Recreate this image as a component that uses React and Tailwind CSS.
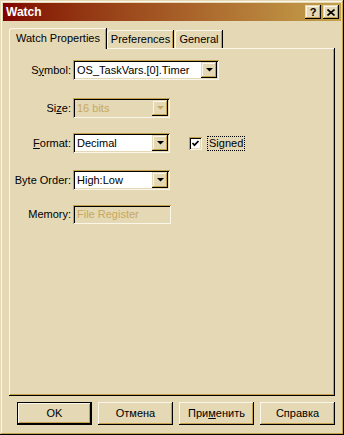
import React from 'react';

const raised = 'shadow-[inset_-1px_-1px_0_#000,inset_1px_1px_0_#E4D8B5,inset_-2px_-2px_0_#C4A24C,inset_2px_2px_0_#FAF6EA]';
const pushRaised = 'shadow-[inset_-1px_-1px_0_#000,inset_1px_1px_0_#FAF6EA,inset_-2px_-2px_0_#C4A24C,inset_2px_2px_0_#E4D8B5]';
const sunken = 'shadow-[inset_1px_1px_0_#C4A24C,inset_-1px_-1px_0_#FAF6EA,inset_2px_2px_0_#000,inset_-2px_-2px_0_#E4D8B5]';

const Arrow = ({ disabled }) => (
  <svg width="7" height="4" viewBox="0 0 7 4">
    <polygon points="0,0 7,0 3.5,3.6" fill={disabled ? '#C8A860' : '#000'} />
  </svg>
);

const Combo = ({ width, text, disabled }) => (
  <div className={`${width} h-[20px] flex p-[2px] ${sunken} ${disabled ? 'bg-[#E4D8B5]' : 'bg-white'}`}>
    <span className={`flex-1 pl-[2px] flex items-center ${disabled ? 'text-[#C8A860]' : 'text-black'}`}>{text}</span>
    <div className={`w-[16px] h-full flex items-center justify-center bg-[#E4D8B5] ${raised}`}>
      <Arrow disabled={disabled} />
    </div>
  </div>
);

const Label = ({ children }) => <div className="w-[62px] text-right whitespace-nowrap">{children}</div>;

const Btn = ({ children, primary }) =>
  primary ? (
    <div className="w-[75px] h-[23px] border border-black">
      <div className={`w-full h-full flex items-center justify-center ${pushRaised}`}>{children}</div>
    </div>
  ) : (
    <div className={`w-[75px] h-[23px] flex items-center justify-center ${pushRaised}`}>{children}</div>
  );

export default function App() {
  return (
    <div className={`w-[344px] h-[435px] bg-[#E4D8B5] p-[3px] text-[11px] leading-none text-black font-['Liberation_Sans',Arial,sans-serif] ${raised}`}>
      {/* title bar */}
      <div className="h-[18px] flex items-center bg-linear-to-r from-[#800000] to-[#C4A24C] pl-[3px] pr-[2px]">
        <span className="flex-1 text-white font-bold text-[12px]">Watch</span>
        <div className="flex gap-[2px]">
          <div className={`w-[16px] h-[14px] bg-[#E4D8B5] flex items-center justify-center font-bold text-[11px] ${raised}`}>?</div>
          <div className={`w-[16px] h-[14px] bg-[#E4D8B5] flex items-center justify-center ${raised}`}>
            <svg width="8" height="7" viewBox="0 0 8 7">
              <path d="M0.5 0.5 L7.5 6.5 M7.5 0.5 L0.5 6.5" stroke="#000" strokeWidth="1.6" />
            </svg>
          </div>
        </div>
      </div>

      <div className="px-[6px] pt-[7px]">
        {/* tabs */}
        <div className="h-[20px] flex items-start">
          <div className={`relative z-10 w-[98px] h-[21px] bg-[#E4D8B5] flex items-center justify-center rounded-tl-[2px] ${'shadow-[inset_-1px_0_0_#000,inset_1px_1px_0_#FAF6EA,inset_-2px_0_0_#C4A24C]'}`}>
            Watch Properties
          </div>
          <div className="mt-[2px] w-[67px] h-[18px] flex items-center justify-center pt-[1px] rounded-tl-[2px] shadow-[inset_-1px_0_0_#000,inset_1px_1px_0_#FAF6EA,inset_-2px_0_0_#C4A24C]">
            Preferences
          </div>
          <div className="mt-[2px] ml-[1px] w-[48px] h-[18px] flex items-center justify-center pt-[1px] rounded-tl-[2px] shadow-[inset_-1px_0_0_#000,inset_1px_1px_0_#FAF6EA,inset_-2px_0_0_#C4A24C]">
            General
          </div>
        </div>

        {/* panel */}
        <div className="h-[348px] flex flex-col pt-[12px] shadow-[inset_-1px_-1px_0_#000,inset_1px_1px_0_#FAF6EA,inset_-2px_-2px_0_#C4A24C]">
          <div className="flex items-center gap-[2px]">
            <Label>S<span className="underline underline-offset-[1px]">y</span>mbol:</Label>
            <Combo width="w-[146px]" text="OS_TaskVars.[0].Timer" />
          </div>
          <div className="flex items-center gap-[2px] mt-[18px]">
            <Label>Si<span className="underline underline-offset-[1px]">z</span>e:</Label>
            <Combo width="w-[97px]" text="16 bits" disabled />
          </div>
          <div className="flex items-center gap-[2px] mt-[15px]">
            <Label><span className="underline underline-offset-[1px]">F</span>ormat:</Label>
            <Combo width="w-[97px]" text="Decimal" />
            <div className={`ml-[17px] w-[13px] h-[13px] bg-white flex items-center justify-center ${sunken}`}>
              <svg width="9" height="9" viewBox="0 0 9 9">
                <polyline points="1.5,4 3.5,6.2 7.5,2" fill="none" stroke="#000" strokeWidth="1.7" />
              </svg>
            </div>
            <div className="ml-[3px] border border-dotted border-black px-[1px] h-[15px] flex items-center">Signed</div>
          </div>
          <div className="flex items-center gap-[2px] mt-[17px]">
            <Label>Byte Order:</Label>
            <Combo width="w-[97px]" text="High:Low" />
          </div>
          <div className="flex items-center gap-[2px] mt-[15px]">
            <Label>Memory:</Label>
            <div className={`w-[98px] h-[19px] flex items-center pl-[4px] text-[#C8A860] ${sunken}`}>File Register</div>
          </div>
        </div>

        {/* buttons */}
        <div className="flex gap-[6px] mt-[6px] ml-[8px]">
          <Btn primary>OK</Btn>
          <Btn>Отмена</Btn>
          <Btn>При<span className="underline underline-offset-[1px]">м</span>енить</Btn>
          <Btn>Справка</Btn>
        </div>
      </div>
    </div>
  );
}
